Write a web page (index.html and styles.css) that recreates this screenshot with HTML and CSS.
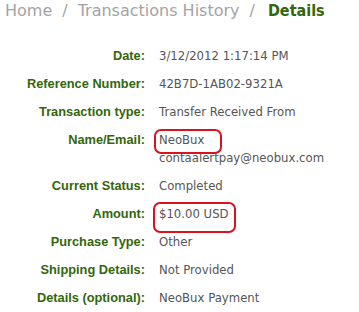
FILE: index.html
```html
<!DOCTYPE html>
<html>
<head>
<meta charset="utf-8">
<link rel="stylesheet" href="styles.css">
</head>
<body>
<div class="crumbs"><span class="link">Home</span><span class="sep">/</span><span class="link">Transactions History</span><span class="sep">/</span><span class="current">Details</span></div>
<div class="details">
  <div class="label">Date:</div><div class="value">3/12/2012 1:17:14 PM</div>
  <div class="label">Reference Number:</div><div class="value">42B7D-1AB02-9321A</div>
  <div class="label">Transaction type:</div><div class="value">Transfer Received From</div>
  <div class="label">Name/Email:</div><div class="value"><span class="mark mark-name">NeoBux</span><br>contaalertpay@neobux.com</div>
  <div class="label">Current Status:</div><div class="value">Completed</div>
  <div class="label">Amount:</div><div class="value"><span class="mark mark-amount">$10.00 USD</span></div>
  <div class="label">Purchase Type:</div><div class="value">Other</div>
  <div class="label">Shipping Details:</div><div class="value">Not Provided</div>
  <div class="label">Details (optional):</div><div class="value">NeoBux Payment</div>
</div>
</body>
</html>
```
FILE: styles.css
```css
html, body { margin: 0; padding: 0; background: #fff; }
body { width: 359px; height: 312px; overflow: hidden; }
.crumbs {
  font-family: "DejaVu Sans", sans-serif;
  font-size: 16px;
  line-height: 20px;
  padding: 1px 0 0 5px;
  color: #a3a3a3;
  white-space: nowrap;
}
.sep { margin: 0 10px; }
.sep + .current { margin-left: 3px; }
.current {
  font-family: "DejaVu Sans Condensed", "DejaVu Sans", sans-serif;
  color: #33660a;
  font-weight: bold;
}
.details {
  display: grid;
  grid-template-columns: 145px 1fr;
  column-gap: 14px;
  row-gap: 10px;
  margin-top: 26px;
  line-height: 18px;
}
.label {
  font-family: "Liberation Sans", sans-serif;
  font-weight: bold;
  font-size: 12.8px;
  color: #33660a;
  text-align: right;
}
.value {
  font-family: "DejaVu Sans", sans-serif;
  font-size: 11.7px;
  color: #555;
}
.mark { position: relative; }
.mark::before {
  content: "";
  position: absolute;
  border: 2px solid #d9121f;
  border-radius: 7px;
}
.mark-name::before { left: -5px; top: -4px; width: 64px; height: 21px; }
.mark-amount::before { left: -6px; top: -5px; width: 79px; height: 27px; }
```
